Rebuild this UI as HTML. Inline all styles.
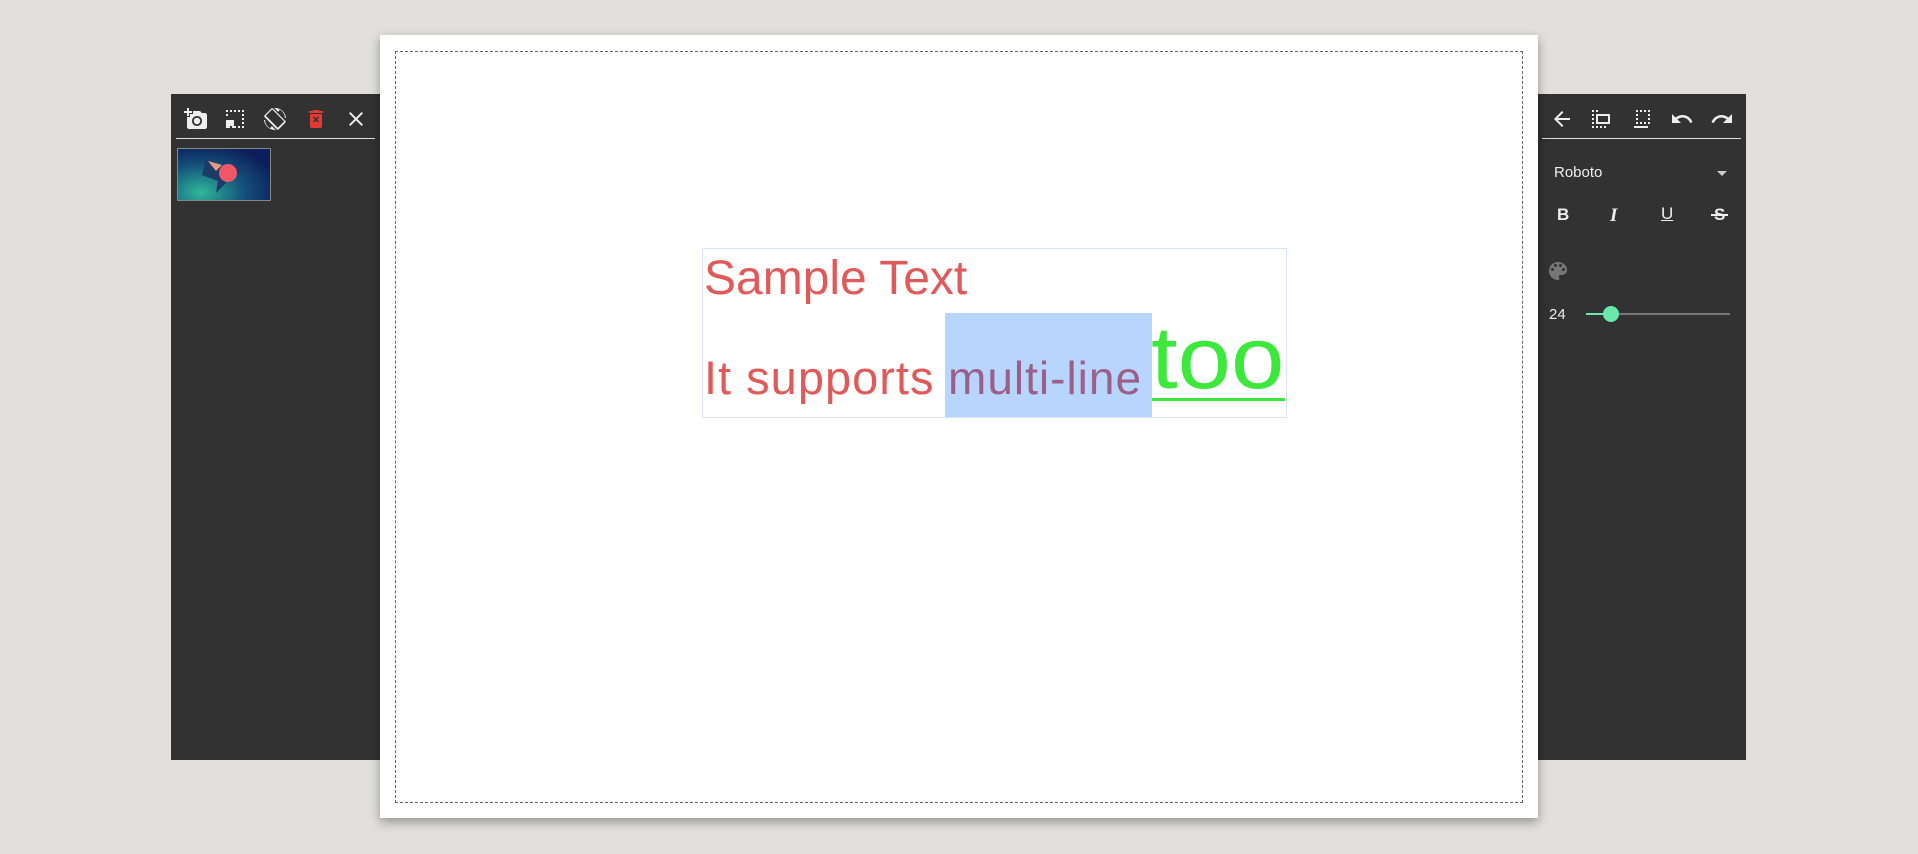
<!DOCTYPE html>
<html><head><meta charset="utf-8"><style>
*{margin:0;padding:0;box-sizing:border-box}
body{width:1918px;height:854px;background:#e1e0de;position:relative;overflow:hidden;font-family:"Liberation Sans",sans-serif}
.panel{position:absolute;background:#323232;top:94px;height:666px}
.sep{position:absolute;height:1px;background:#ddd}
.ic{position:absolute;width:24px;height:24px}
#canvas{position:absolute;left:380px;top:35px;width:1158px;height:783px;background:#fff;box-shadow:0 4px 10px rgba(0,0,0,.35)}
#dash{position:absolute;left:15px;top:16px;width:1128px;height:752px;border:1px dashed #666}
#tb{position:absolute;left:702px;top:248px;width:585px;height:170px;border:1.5px solid #d8e4fa}
.t{position:absolute;white-space:nowrap;color:#e05a5a}
.w{color:#eee;position:absolute;font-weight:bold;font-size:17px}
</style></head><body>
<div class="panel" style="left:171px;width:215px"></div>
<div class="panel" style="left:1532px;width:214px"></div>
<div class="sep" style="left:176px;top:138px;width:199px"></div>
<div class="sep" style="left:1542px;top:138px;width:199px"></div>
<svg class="ic" style="left:184px;top:107px" viewBox="0 0 24 24"><path fill="#eee" d="M3 4V1h2v3h3v2H5v3H3V6H0V4zm3 6V7h3V4h7l1.8 2H21c1.1 0 2 .9 2 2v12c0 1.1-.9 2-2 2H5c-1.1 0-2-.9-2-2V10zm7 9c2.8 0 5-2.2 5-5s-2.2-5-5-5-5 2.2-5 5 2.2 5 5 5zm-3.2-5c0 1.8 1.4 3.2 3.2 3.2s3.2-1.4 3.2-3.2-1.4-3.2-3.2-3.2-3.2 1.4-3.2 3.2z"/></svg>
<svg class="ic" style="left:223px;top:107px" viewBox="0 0 24 24"><path fill="#eee" d="M3 5h2V3H3v2zm0 4h2V7H3v2zm4 12h2v-2H7v2zM7 5h2V3H7v2zm4 0h2V3h-2v2zm4 0h2V3h-2v2zm4 0h2V3h-2v2zm0 4h2V7h-2v2zm0 4h2v-2h-2v2zm0 4h2v-2h-2v2zm0 4h2v-2h-2v2zm-4 0h2v-2h-2v2zm-4 0h2v-2h-2v2zM3 13h8v8H3z"/></svg>
<svg class="ic" style="left:263px;top:107px" viewBox="0 0 24 24"><path fill="#eee" d="M16.5 2.5a10 10 0 0 1 5.4 8.5h1.1A11 11 0 0 0 12 1l-.7.03 3.8 3.8 1.3-1.3zM10.2 1.7a1.5 1.5 0 0 0-2.1 0L1.7 8.1a1.5 1.5 0 0 0 0 2.1l12 12a1.5 1.5 0 0 0 2.1 0l6.4-6.4a1.5 1.5 0 0 0 0-2.1l-12-12zm4.6 19.1l-12-12 6.4-6.4 12 12-6.4 6.4zM7.5 21.5A10 10 0 0 1 2.1 13H1a11 11 0 0 0 11 10l.7-.03-3.8-3.8-1.4 1.3z"/></svg>
<svg class="ic" style="left:304px;top:107px" viewBox="0 0 24 24"><path fill="#e53935" d="M6 19c0 1.1.9 2 2 2h8c1.1 0 2-.9 2-2V7H6v12zm3-8.5l1-1 2 2 2-2 1 1-2 2 2 2-1 1-2-2-2 2-1-1 2-2-2-2zM15.5 4l-1-1h-5l-1 1H5v2h14V4z"/></svg>
<svg class="ic" style="left:344px;top:107px" viewBox="0 0 24 24"><path fill="#eee" d="M19 6.4L17.6 5 12 10.6 6.4 5 5 6.4 10.6 12 5 17.6 6.4 19 12 13.4 17.6 19 19 17.6 13.4 12z"/></svg>
<div style="position:absolute;left:177px;top:148px;width:94px;height:53px;border:1px solid #888;background:radial-gradient(ellipse at 25% 85%,#2fb89a,#14507a 45%,#0c1f5c 80%)">
<svg width="92" height="51" viewBox="0 0 92 51"><polygon points="28,10 48,18 70,16 52,30 38,44 40,32 24,26" fill="#1c3b66"/><circle cx="50" cy="24" r="9" fill="#f0586a"/><polygon points="30,12 44,16 38,22" fill="#e89a80"/></svg></div>
<svg class="ic" style="left:1550px;top:107px" viewBox="0 0 24 24"><path fill="#eee" d="M20 11H7.8l5.6-5.6L12 4l-8 8 8 8 1.4-1.4L7.8 13H20z"/></svg>
<svg class="ic" style="left:1589px;top:107px" viewBox="0 0 24 24"><path fill="#eee" d="M7 7h14v10H7zM9 9v6h10V9zM3 3h2v2H3zM3 7h2v2H3zm0 4h2v2H3zm0 4h2v2H3zm0 4h2v2H3zm4 0h2v2H7zm4 0h2v2h-2zm4 0h2v2h-2zM7 3h2v2H7z"/></svg>
<svg class="ic" style="left:1629px;top:107px" viewBox="0 0 24 24"><path fill="#eee" d="M3 7h2v14h14v-2H5V7zM7 3h2v2H7zm4 0h2v2h-2zm4 0h2v2h-2zm4 0h2v2h-2zm0 4h2v2h-2zm0 4h2v2h-2zm0 4h2v2h-2zm-4 0h2v2h-2zm-4 0h2v2h-2zM7 7h2v2H7zm0 4h2v2H7zm0 4h2v2H7z"/></svg>
<svg class="ic" style="left:1670px;top:107px" viewBox="0 0 24 24"><path fill="#eee" d="M12.5 8c-2.65 0-5.05 1-6.9 2.6L2 7v9h9l-3.62-3.62A8 8 0 0 1 20.1 16l2.37-.78A10.5 10.5 0 0 0 12.5 8z"/></svg>
<svg class="ic" style="left:1710px;top:107px" viewBox="0 0 24 24"><path fill="#eee" d="M18.4 10.6A10.5 10.5 0 0 0 1.5 15.2l2.4.8A8 8 0 0 1 16.6 12.4L13 16h9V7z"/></svg>
<div style="position:absolute;left:1554px;top:164px;color:#eee;font-size:15px">Roboto</div>
<div style="position:absolute;left:1717px;top:171px;border:5px solid transparent;border-top-color:#ccc;border-bottom:0"></div>
<div class="w" style="left:1557px;top:205px">B</div>
<div class="w" style="left:1610px;top:205px;font-family:'Liberation Serif',serif;font-style:italic;font-size:19px">I</div>
<div class="w" style="left:1661px;top:204px;font-weight:normal;text-decoration:underline">U</div>
<div class="w" style="left:1714px;top:205px">S</div>
<div style="position:absolute;left:1711px;top:214px;width:17px;height:2px;background:#eee"></div>
<svg class="ic" style="left:1546px;top:259px" viewBox="0 0 24 24"><path fill="#777" d="M12 3a9 9 0 0 0 0 18c.83 0 1.5-.67 1.5-1.5 0-.39-.15-.74-.39-1.01-.23-.26-.38-.61-.38-.99 0-.83.67-1.5 1.5-1.5H16c2.76 0 5-2.24 5-5 0-4.420-4.03-8-9-8zm-5.5 9a1.5 1.5 0 1 1 0-3 1.5 1.5 0 0 1 0 3zm3-4a1.5 1.5 0 1 1 0-3 1.5 1.5 0 0 1 0 3zm5 0a1.5 1.5 0 1 1 0-3 1.5 1.5 0 0 1 0 3zm3 4a1.5 1.5 0 1 1 0-3 1.5 1.5 0 0 1 0 3z"/></svg>
<div style="position:absolute;left:1549px;top:306px;color:#eee;font-size:15px">24</div>
<div style="position:absolute;left:1586px;top:313px;width:144px;height:2px;background:#777"></div>
<div style="position:absolute;left:1586px;top:313px;width:25px;height:2px;background:#69e8a9"></div>
<div style="position:absolute;left:1603px;top:306px;width:16px;height:16px;border-radius:50%;background:#69e8a9"></div>
<div id="canvas"><div id="dash"></div></div>
<div id="tb"></div>
<div style="position:absolute;left:945px;top:313px;width:207px;height:104px;background:#b8d6fd"></div>
<div class="t" style="left:704px;top:249px;font-size:48px;line-height:60px">Sample Text</div>
<div class="t" style="left:704px;top:348px;font-size:47px;line-height:60px;letter-spacing:1px">It supports</div>
<div class="t" style="left:948px;top:348px;font-size:46px;line-height:60px;color:#9c5f89;letter-spacing:1px">multi-line</div>
<div class="t" style="left:1151px;top:308px;font-size:88px;line-height:100px;color:#3de83d;transform:scaleX(1.09);transform-origin:0 0">too</div>
<div style="position:absolute;left:1152px;top:398px;width:133px;height:3px;background:#3de83d"></div>
</body></html>
